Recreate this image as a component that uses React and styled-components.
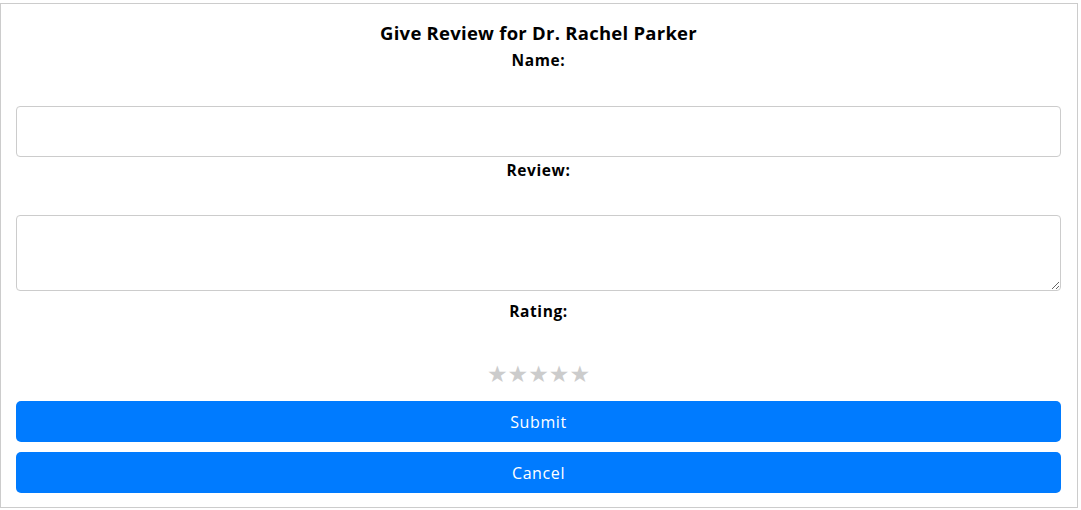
import React from "react";
import styled, { createGlobalStyle } from "styled-components";

const Global = createGlobalStyle`
  html, body { margin: 0; padding: 0; background: #fff; }
  body { font-family: "Open Sans", "Liberation Sans", sans-serif; color: #000; }
  * { box-sizing: border-box; }
`;

const Modal = styled.div`
  margin-top: 3px;
  width: 1078px;
  height: 505px;
  border: 1px solid #ccc;
  background: #fff;
  padding: 15px 16px 0 15px;
  display: flex;
  flex-direction: column;
`;

const Title = styled.h2`
  margin: 0;
  font-size: 18.5px;
  letter-spacing: 0.25px;
  line-height: 28px;
  font-weight: 700;
  text-align: center;
`;

const Label = styled.label`
  display: block;
  text-align: center;
  font-size: 15.5px;
  letter-spacing: 0.6px;
  line-height: 22px;
  font-weight: 700;
  margin-top: ${(p) => p.$top}px;
  margin-bottom: ${(p) => p.$bottom}px;
`;

const Input = styled.input`
  display: block;
  width: 100%;
  height: 51px;
  border: 1px solid #ccc;
  border-radius: 4px;
  padding: 0 10px;
  font: inherit;
  outline: none;
`;

const TextArea = styled.textarea`
  display: block;
  width: 100%;
  height: 76px;
  border: 1px solid #ccc;
  border-radius: 4px;
  padding: 10px;
  font: inherit;
  outline: none;
  resize: vertical;
`;

const Stars = styled.div`
  display: flex;
  justify-content: center;
  height: 24px;
  margin-bottom: 15px;
`;

const Star = styled.span`
  font-family: "DejaVu Sans", sans-serif;
  font-size: 23px;
  line-height: 24px;
  color: #ccc;
  cursor: pointer;
`;

const Button = styled.button`
  display: block;
  width: 100%;
  height: 41px;
  border: none;
  border-radius: 5px;
  background: #007bff;
  color: #fff;
  font-family: inherit;
  font-size: 16px;
  letter-spacing: 0.6px;
  cursor: pointer;
  margin-bottom: ${(p) => p.$bottom || 0}px;
`;

export default function App() {
  return (
    <>
      <Global />
      <Modal>
        <Title>Give Review for Dr. Rachel Parker</Title>
        <Label $top={2} $bottom={35}>Name:</Label>
        <Input type="text" />
        <Label $top={2} $bottom={34}>Review:</Label>
        <TextArea />
        <Label $top={9} $bottom={40}>Rating:</Label>
        <Stars>
          {[1, 2, 3, 4, 5].map((i) => (
            <Star key={i}>★</Star>
          ))}
        </Stars>
        <Button $bottom={10}>Submit</Button>
        <Button>Cancel</Button>
      </Modal>
    </>
  );
}
